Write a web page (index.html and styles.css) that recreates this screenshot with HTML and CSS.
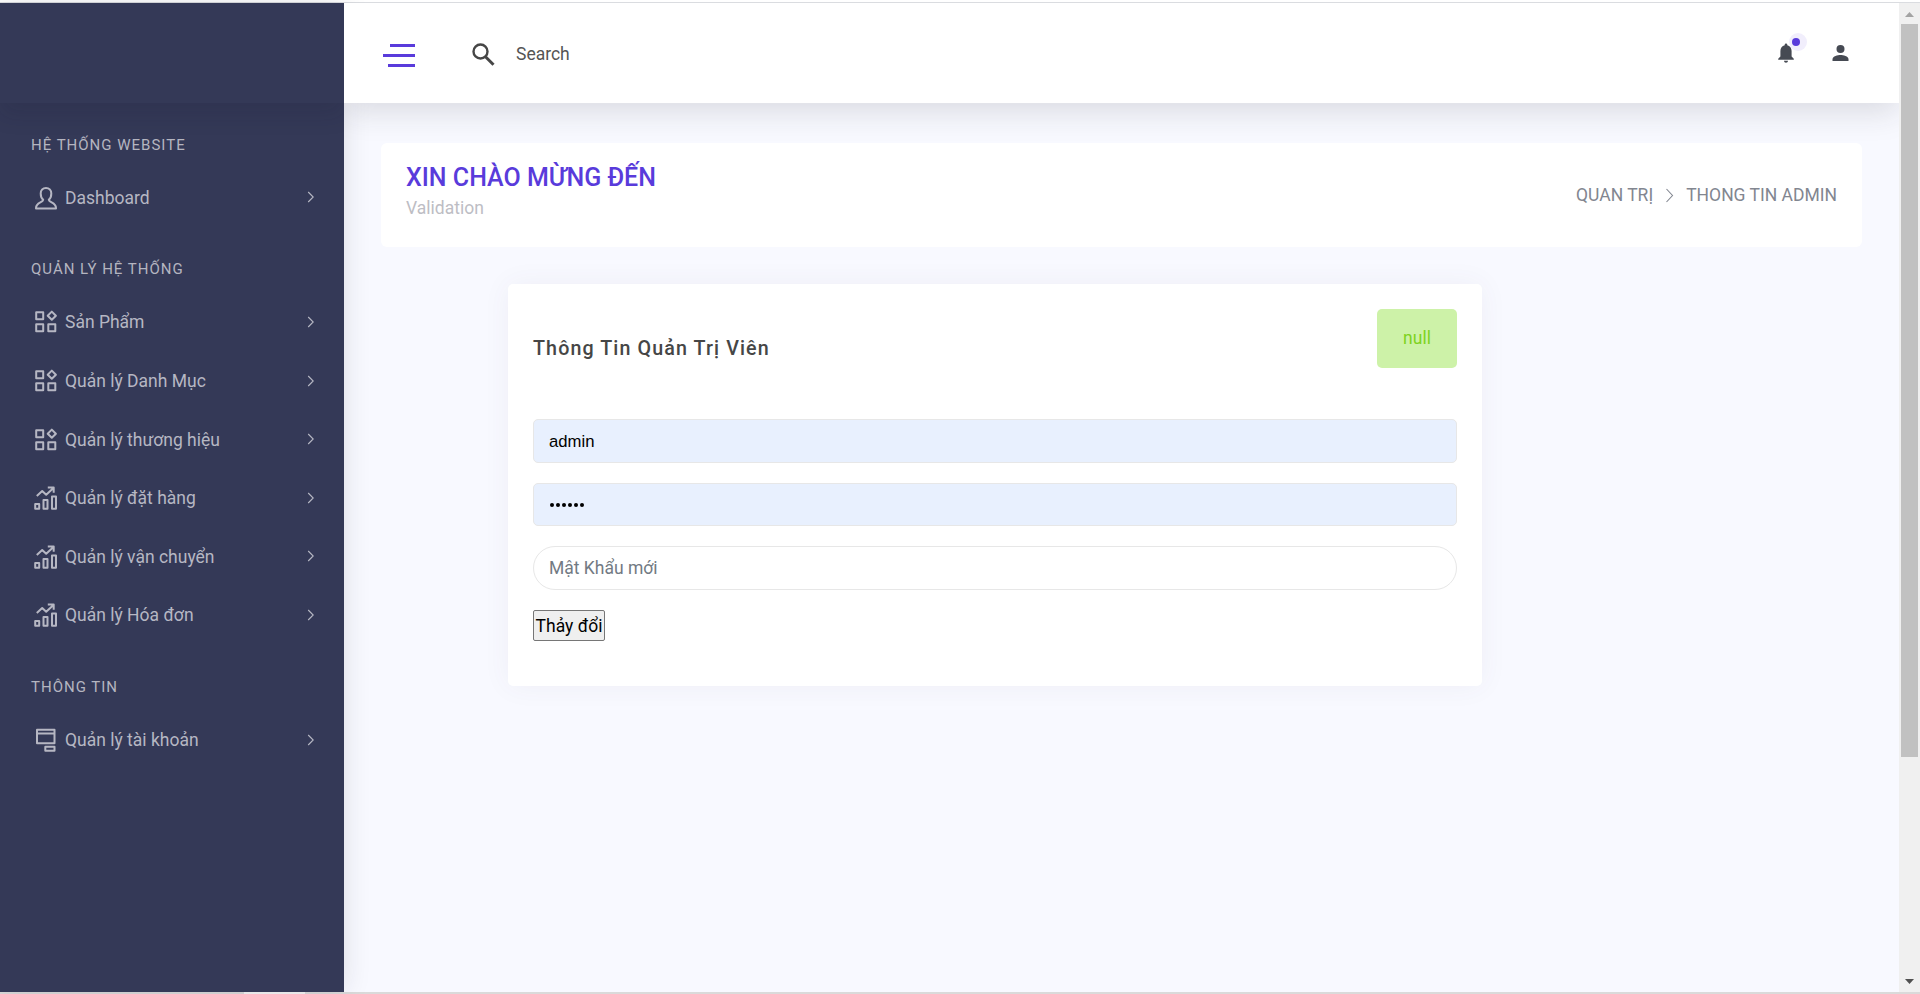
FILE: index.html
```html
<!DOCTYPE html>
<html lang="vi">
<head>
<meta charset="utf-8">
<title>Admin</title>
<link rel="stylesheet" href="styles.css">
</head>
<body>
<svg class="defs" width="0" height="0">
  <symbol id="i-user" viewBox="0 0 24 24"><path d="M9.200 13.800C7.300 12.200 6.700 9.800 6.700 7.400C6.700 4.200 8.900 1.900 12 1.900s5.300 2.300 5.300 5.500c0 2.400-.6 4.800-2.500 6.400c.5 3 7.200 2.500 7.200 8.200v.6H2v-.6c0-5.700 6.700-5.200 7.200-8.200z"/></symbol>
  <symbol id="i-grid" viewBox="0 0 24 24"><path d="M2.200 2.200h7v7h-7zM2.200 14.200h7v7h-7zM14.300 14.200h7v7h-7zM17.800 1.600l4.100 4.100-4.100 4.100-4.100-4.100z"/></symbol>
  <symbol id="i-chart" viewBox="0 0 24 24"><path d="M1.200 18h4v4.800h-4zM9.500 14h4v8.800h-4zM18 10.500h4v12.300h-4zM2.800 10l5.400-5 4 3.700 7-6.400M13.800 1.600h5.900v5.200"/></symbol>
  <symbol id="i-card" viewBox="0 0 24 24"><path d="M3 1.700h17.500v13.500H3zM3 5.400h17.500M11.300 18.700h9.200v4h-9.200z"/></symbol>
  <symbol id="i-right" viewBox="0 0 12 12"><path d="M3.200 1l5 5-5 5"/></symbol>
</svg>
<div class="screen">
  <div class="view">
    <aside class="sidebar">
      <div class="brand"></div>
      <nav class="menu">
        <section class="group">
          <h6 class="group-title">HỆ THỐNG WEBSITE</h6>
          <a class="item"><svg class="ico"><use href="#i-user"/></svg><span class="label">Dashboard</span><svg class="arrow"><use href="#i-right"/></svg></a>
        </section>
        <section class="group">
          <h6 class="group-title">QUẢN LÝ HỆ THỐNG</h6>
          <a class="item"><svg class="ico"><use href="#i-grid"/></svg><span class="label">Sản Phẩm</span><svg class="arrow"><use href="#i-right"/></svg></a>
          <a class="item"><svg class="ico"><use href="#i-grid"/></svg><span class="label">Quản lý Danh Mục</span><svg class="arrow"><use href="#i-right"/></svg></a>
          <a class="item"><svg class="ico"><use href="#i-grid"/></svg><span class="label">Quản lý thương hiệu</span><svg class="arrow"><use href="#i-right"/></svg></a>
          <a class="item"><svg class="ico"><use href="#i-chart"/></svg><span class="label">Quản lý đặt hàng</span><svg class="arrow"><use href="#i-right"/></svg></a>
          <a class="item"><svg class="ico"><use href="#i-chart"/></svg><span class="label">Quản lý vận chuyển</span><svg class="arrow"><use href="#i-right"/></svg></a>
          <a class="item"><svg class="ico"><use href="#i-chart"/></svg><span class="label">Quản lý Hóa đơn</span><svg class="arrow"><use href="#i-right"/></svg></a>
        </section>
        <section class="group">
          <h6 class="group-title">THÔNG TIN</h6>
          <a class="item"><svg class="ico"><use href="#i-card"/></svg><span class="label">Quản lý tài khoản</span><svg class="arrow"><use href="#i-right"/></svg></a>
        </section>
      </nav>
    </aside>
    <div class="page">
      <header class="topbar">
        <svg class="burger" width="32" height="25" viewBox="0 0 32 25"><path d="M7 2.500h25M0 12.500h32M5 22.500h27" stroke="#593bdb" stroke-width="3"/></svg>
        <svg class="magnify" width="23" height="23" viewBox="0 0 23 23" fill="none" stroke="#464646" stroke-width="2.400"><circle cx="8.500" cy="8.500" r="7"/><path d="M13.500 13.700l8 8" stroke-width="3"/></svg>
        <span class="search">Search</span>
        <div class="tools">
          <div class="bell">
            <svg width="16" height="20" viewBox="0 0 16 20" fill="#464a53"><path d="M8 .5c.8 0 1.300.6 1.300 1.300v.4c2.700.6 4.300 2.900 4.300 5.800V13.500L15.800 15.800V16.800H.2V15.800L2.400 13.500V8c0-2.900 1.600-5.200 4.300-5.800v-.4C6.700 1.100 7.200.5 8 .5zM6 17.700h4c0 1.100-.9 2-2 2s-2-.9-2-2z"/></svg>
            <i class="pulse"></i>
          </div>
          <svg width="17" height="16" viewBox="0 0 17 16" fill="#464a53"><circle cx="8.500" cy="4" r="4"/><path d="M.5 16v-2c0-2.700 5.300-4.100 8-4.100s8 1.400 8 4.100v2z"/></svg>
        </div>
      </header>
      <main class="content">
        <div class="titlebar">
          <div>
            <h4 class="hello">XIN CHÀO MỪNG ĐẾN</h4>
            <p class="sub">Validation</p>
          </div>
          <div class="crumbs"><span>QUAN TRỊ</span><svg class="crumb-arrow" viewBox="0 0 9 15"><path d="M1.500 1l6 6.500-6 6.500"/></svg><span>THONG TIN ADMIN</span></div>
        </div>
        <div class="card">
          <div class="card-head">
            <h4 class="card-title">Thông Tin Quản Trị Viên</h4>
            <div class="alert">null</div>
          </div>
          <form class="form">
            <div class="field filled">admin</div>
            <div class="field filled dots"><i></i><i></i><i></i><i></i><i></i><i></i></div>
            <div class="field round">Mật Khẩu mới</div>
            <button class="submit" type="button">Thảy đổi</button>
          </form>
        </div>
      </main>
    </div>
    <div class="scrollbar">
      <svg class="tri" viewBox="0 0 9 5"><path d="M4.500 0L9 5H0z" fill="#a3a3a3"/></svg>
      <div class="thumb"></div>
      <svg class="tri down" viewBox="0 0 9 5"><path d="M0 0h9L4.500 5z" fill="#505050"/></svg>
    </div>
  </div>
  <div class="edge"><i></i></div>
</div>
</body>
</html>
```
FILE: styles.css
```css
* { box-sizing: border-box; }
body { margin: 0; font-family: Roboto, "Liberation Sans", sans-serif; font-size: 17.5px; overflow: hidden; }
h4, h6, p { margin: 0; font-weight: 400; }
.defs { display: block; height: 0; }
.screen { width: 1920px; height: 994px; display: flex; flex-direction: column; background: #fff; padding-top: 2px; }
.view { height: 990px; display: flex; border-top: 1px solid #dadce0; }

.sidebar { width: 344px; background: #343957; position: relative; z-index: 2; box-shadow: 0 0 26px rgba(30, 30, 50, .12); }
.brand { height: 100px; box-shadow: 0 12px 20px rgba(20, 20, 50, .13); clip-path: inset(0 0 -60px 0); }
.menu { padding-top: 17.6px; }
.group { margin-bottom: 18px; }
.group-title { height: 48px; line-height: 49px; padding-left: 31px; font-size: 15px; letter-spacing: 1px; color: #b4b5c0; }
.item { height: 58.6px; display: flex; align-items: center; padding: 0 27px 0 33.5px; color: #b6b7c3; }
.ico { width: 24px; height: 24px; fill: none; stroke: #b6b7c3; stroke-width: 2; stroke-linejoin: round; margin-right: 7.5px; }
.label { flex: 1; white-space: nowrap; }
.arrow { width: 12px; height: 12px; margin-top: -1px; fill: none; stroke: #b6b7c3; stroke-width: 1.1; }

.page { width: 1555px; background: #f8f9ff; }
.topbar { position: relative; z-index: 3; height: 100px; background: #fff; display: flex; align-items: center; padding: 0 50px 0 39px; box-shadow: 0 8px 30px rgba(40, 40, 50, .15); clip-path: inset(0 0 -60px 0); }
.burger { margin-top: 4px; }
.magnify { margin: 3px 0 0 57px; }
.search { margin: 2px 0 0 21px; color: #555; }
.tools { margin-left: auto; display: flex; align-items: center; gap: 38px; }
.bell { position: relative; height: 20px; }
.bell svg { display: block; }
.pulse { position: absolute; left: 11px; top: -10px; width: 18px; height: 18px; border-radius: 50%; background: #f1eefc; }
.pulse::after { content: ""; position: absolute; left: 3px; top: 5px; width: 8px; height: 8px; border-radius: 50%; background: #593bdb; }

.content { padding: 40px 37px; }
.titlebar { position: relative; z-index: 4; height: 104px; background: #fff; border-radius: 6px; display: flex; justify-content: space-between; padding: 18px 25px; }
.hello { font-size: 25px; line-height: 33px; font-weight: 500; color: #593bdb; }
.sub { line-height: 28px; color: #bdbdc4; }
.crumbs { display: flex; align-items: center; height: 68px; color: #828690; }
.crumb-arrow { width: 9px; height: 15px; margin: 0 12px; fill: none; stroke: #828690; stroke-width: 1.1; }

.card { width: 974px; height: 402px; margin: 37px 0 0 127px; background: #fff; border-radius: 5px; padding: 25px; box-shadow: 0 0 28px rgba(82, 63, 105, .06); }
.card-head { display: flex; justify-content: space-between; height: 110px; }
.card-title { line-height: 79px; font-size: 19.7px; font-weight: 500; letter-spacing: 1.1px; color: #464646; }
.alert { width: 80px; height: 59px; line-height: 59px; text-align: center; border-radius: 5px; background: #cdf2a8; color: #7ed321; }
.form { display: flex; flex-direction: column; align-items: flex-start; gap: 20px; }
.field { width: 924px; height: 44px; line-height: 43px; padding: 0 15px; border: 1px solid #e7e7e7; border-radius: 5px; color: #727a83; }
.filled { background: #e8f0fe; color: #000; font-family: "Liberation Sans", sans-serif; font-size: 16.7px; line-height: 44px; }
.dots { height: 43px; display: flex; align-items: center; gap: 2px; padding-left: 16px; }
.dots i { width: 4px; height: 4px; border-radius: 50%; background: #000; }
.round { border-radius: 22px; }
.submit { width: 72px; height: 31px; padding: 0; font: 17.5px Roboto, sans-serif; background: #efefef; border: 1px solid #767676; border-radius: 2px; color: #000; white-space: nowrap; }

.scrollbar { width: 21px; background: #f0f0f0; display: flex; flex-direction: column; align-items: center; }
.tri { width: 9px; height: 5px; margin-top: 9px; }
.thumb { width: 17px; height: 733px; margin-top: 7px; background: #c1c1c1; }
.down { margin: auto 0 8px; }
.edge { height: 2px; background: #dadada; padding-left: 244px; }
.edge i { display: block; width: 61px; height: 2px; background: #f5f5f5; }
```
